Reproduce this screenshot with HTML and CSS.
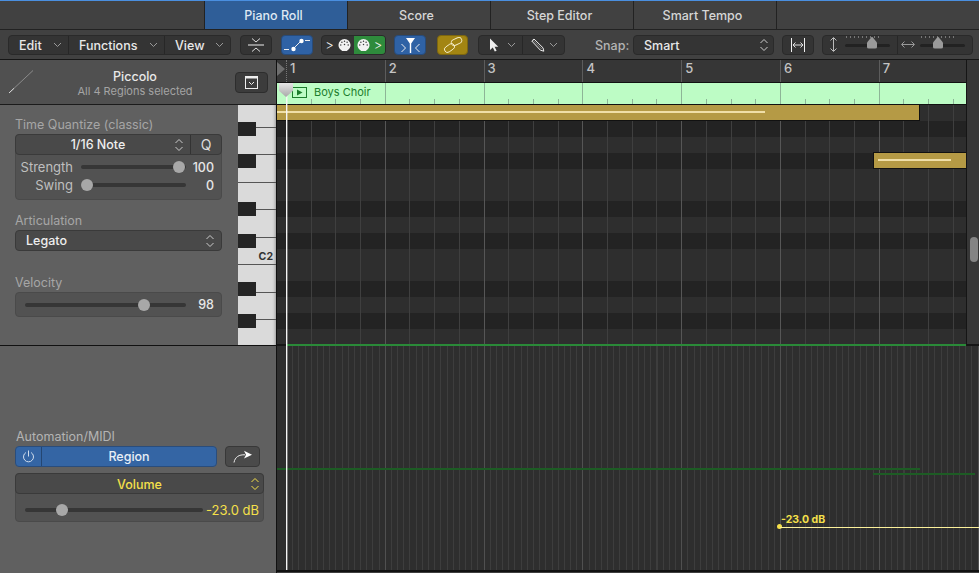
FILE: index.html
```html
<!DOCTYPE html>
<html lang="en">

<head>
    <meta charset="UTF-8">
    <title>Piano Roll</title>
    <link rel="stylesheet" href="styles.css">
</head>

<body>
    <svg class="defs" width="0" height="0">
        <symbol id="chev" viewBox="0 0 9 6"><path d="M1 1l3.500 3.500L8 1" fill="none" stroke="currentColor" stroke-width="1"/></symbol>
        <symbol id="updown" viewBox="0 0 10 16"><path d="M1.500 6L5 2.500 8.500 6M1.500 10L5 13.500 8.500 10" fill="none" stroke="currentColor" stroke-width="1"/></symbol>
        <symbol id="midi" viewBox="0 0 14 14"><path d="M7 .5a6.500 6.500 0 0 1 6.500 6.500c0 2.600-1.500 4.800-3.600 5.800v.7H4.100v-.7C2 11.800.5 9.600.5 7A6.500 6.500 0 0 1 7 .5z" fill="currentColor"/><g fill="#3a3a3a"><circle cx="3" cy="7" r=".8"/><circle cx="4.200" cy="4" r=".8"/><circle cx="7" cy="2.900" r=".8"/><circle cx="9.800" cy="4" r=".8"/><circle cx="11" cy="7" r=".8"/><circle cx="7" cy="6.500" r=".8"/></g></symbol>
    </svg>

    <div class="tabs">
        <div class="tab-spacer"></div>
        <div class="tab active">Piano Roll</div>
        <div class="tab">Score</div>
        <div class="tab">Step Editor</div>
        <div class="tab">Smart Tempo</div>
    </div>

    <div class="toolbar">
        <div class="btn-group menus">
            <div class="menu edit">Edit <svg class="chev"><use href="#chev"/></svg></div>
            <div class="menu functions">Functions <svg class="chev"><use href="#chev"/></svg></div>
            <div class="menu view">View <svg class="chev"><use href="#chev"/></svg></div>
        </div>
        <div class="btn-group icon-btn collapse">
            <svg width="18" height="16" viewBox="0 0 18 16"><path d="M5 1.500l4 3.500 4-3.500M5 14.500l4-3.500 4 3.500" fill="none" stroke="#ddd"/><path d="M1 8h16" stroke="#eee"/></svg>
        </div>
        <div class="btn-group icon-btn blue curve">
            <svg width="28" height="16" viewBox="0 0 28 16"><path d="M1 12.500h5M22 3.500h5M11 11l6-6" stroke="#eee" fill="none"/><circle cx="10.500" cy="12" r="2.200" fill="#fff"/><circle cx="18.500" cy="4" r="2.200" fill="#fff"/></svg>
        </div>
        <div class="btn-group midi-group">
            <div class="midi-half">
                <span class="gt">&gt;</span>
                <svg class="midi"><use href="#midi"/></svg>
            </div>
            <div class="midi-half on">
                <svg class="midi"><use href="#midi"/></svg>
                <span class="gt">&gt;</span>
            </div>
        </div>
        <div class="btn-group icon-btn blue filter">
            <svg width="26" height="16" viewBox="0 0 26 16"><path d="M4.500 7l4 4-4 4M22.500 7l-4 4 4 4" fill="none" stroke="#eee"/><path d="M9 1h9l-3.800 5.500V16h-1.400V6.500z" fill="#fff"/></svg>
        </div>
        <div class="btn-group icon-btn link">
            <svg width="20" height="16" viewBox="0 0 20 16" fill="none" stroke="#f4ecc8" stroke-width=".9"><rect x="1" y="8" width="11" height="6" rx="3" transform="rotate(-35 6.500 11)"/><rect x="8" y="1.500" width="11" height="6" rx="3" transform="rotate(-25 13.500 4.500)"/></svg>
        </div>
        <div class="btn-group tools">
            <div class="tool pointer">
                <svg width="10" height="14" viewBox="0 0 10 14"><path d="M1 .5v11.500l2.800-2.500 2 4 1.800-.8-2-3.900h3.700z" fill="#eee"/></svg>
                <svg class="chev"><use href="#chev"/></svg>
            </div>
            <div class="tool pencil">
                <svg width="14" height="14" viewBox="0 0 14 14"><path d="M.8 3L3 1l9 8.800.8 3.400-3.400-1z" fill="none" stroke="#eee"/><path d="M1.800 2l9 9" stroke="#aaa" stroke-width=".7"/></svg>
                <svg class="chev"><use href="#chev"/></svg>
            </div>
        </div>
        <div class="snap-label">Snap:</div>
        <div class="btn-group snap-select">
            <span>Smart</span>
            <svg class="updown"><use href="#updown"/></svg>
        </div>
        <div class="btn-group icon-btn fit">
            <svg width="14" height="14" viewBox="0 0 14 14"><path d="M.5 0v14M13.500 0v14" stroke="#eee"/><path d="M2 7h10M4.500 4.500L2 7l2.500 2.500M9.500 4.500L12 7 9.500 9.500" fill="none" stroke="#ddd"/></svg>
        </div>
        <div class="btn-group zooms">
            <div class="zoom-part vert">
                <svg width="9" height="15" viewBox="0 0 9 15"><path d="M4.500 1v13M1.500 3.500l3-3 3 3M1.500 11.500l3 3 3-3" fill="none" stroke="#bbb"/></svg>
                <div class="zoom-slider"><span class="zoom-knob zk-vert"></span></div>
            </div>
            <div class="zoom-part horiz">
                <svg width="14" height="9" viewBox="0 0 14 9"><path d="M1 4.500h12M3.500 1.500l-3 3 3 3M10.500 1.500l3 3-3 3" fill="none" stroke="#999"/></svg>
                <div class="zoom-slider"><span class="zoom-knob zk-horiz"></span></div>
            </div>
        </div>
    </div>

    <div class="main">
        <div class="editor">
            <div class="left">
                <div class="track-head">
                    <svg class="flute" width="28" height="26" viewBox="0 0 28 26"><path d="M2 24L26 1.500" stroke="#999" stroke-width=".8"/><path d="M2 24l5-4.700" stroke="#eee" stroke-width=".8"/></svg>
                    <div class="track-name">
                        <div class="track-title">Piccolo</div>
                        <div class="track-sub">All 4 Regions selected</div>
                    </div>
                    <div class="head-btn">
                        <svg width="13" height="13" viewBox="0 0 13 13"><rect x=".5" y=".5" width="12" height="12" fill="none" stroke="#eee"/><path d="M0 1.500h13" stroke="#eee" stroke-width="2"/><path d="M4 6l2.500 2.500L9 6" fill="none" stroke="#eee"/></svg>
                    </div>
                </div>
                <div class="left-body">
                    <div class="inspector">
                        <div class="field-label">Time Quantize (classic)</div>
                        <div class="box quantize">
                            <div class="select-row">
                                <div class="select-main note-select">1/16 Note <svg class="updown"><use href="#updown"/></svg></div>
                                <div class="q">Q</div>
                            </div>
                            <div class="slider-row strength">
                                <span class="slider-name">Strength</span>
                                <div class="slider"><span class="knob" style="left: 93%"></span></div>
                                <span class="slider-val">100</span>
                            </div>
                            <div class="slider-row swing">
                                <span class="slider-name">Swing</span>
                                <div class="slider"><span class="knob" style="left: 6%"></span></div>
                                <span class="slider-val">0</span>
                            </div>
                        </div>
                        <div class="field-label articulation-label">Articulation</div>
                        <div class="select-row solo">
                            <div class="select-main legato">Legato <svg class="updown"><use href="#updown"/></svg></div>
                        </div>
                        <div class="field-label velocity-label">Velocity</div>
                        <div class="box velocity">
                            <div class="slider"><span class="knob" style="left: 74%"></span></div>
                            <span class="slider-val">98</span>
                        </div>
                    </div>
                    <div class="keys">
                        <div class="white first"></div>
                        <div class="white"></div>
                        <div class="white"></div>
                        <div class="white"></div>
                        <div class="white"></div>
                        <div class="white c-key">C2</div>
                        <div class="white"></div>
                        <div class="white"></div>
                        <div class="white last"></div>
                        <span class="black" style="top: 17px"></span>
                        <span class="black" style="top: 49px"></span>
                        <span class="black" style="top: 97px"></span>
                        <span class="black" style="top: 129px"></span>
                        <span class="black" style="top: 177px"></span>
                        <span class="black" style="top: 209px"></span>
                    </div>
                </div>
            </div>
            <div class="roll">
                <div class="ruler">
                    <span class="locator"></span>
                    <div class="bar-nums">
                        <span class="bar-num">1</span>
                        <span class="bar-num">2</span>
                        <span class="bar-num">3</span>
                        <span class="bar-num">4</span>
                        <span class="bar-num">5</span>
                        <span class="bar-num">6</span>
                        <span class="bar-num">7</span>
                    </div>
                </div>
                <div class="region-strip">
                    <div class="strip-lines"></div>
                    <div class="region-label">
                        <svg width="15" height="11" viewBox="0 0 15 11"><rect x=".5" y=".5" width="14" height="10" fill="none" stroke="#1c7d2c"/><path d="M5 2.500l5.500 3-5.500 3z" fill="#1c7d2c"/></svg>
                        <span>Boys Choir</span>
                    </div>
                </div>
                <div class="notes">
                    <div class="grid-lines"></div>
                    <div class="note note-a"><span class="vel vel-a"></span></div>
                    <div class="note note-b"><span class="vel vel-b"></span></div>
                </div>
            </div>
            <div class="scrollbar"><span class="thumb"></span></div>
        </div>

        <div class="auto">
            <div class="auto-left">
                <div class="field-label auto-label">Automation/MIDI</div>
                <div class="auto-btns">
                    <div class="region-btn">
                        <span class="power">
                            <svg width="13" height="13" viewBox="0 0 13 13"><path d="M4 2.500a5 5 0 1 0 5 0M6.500 .5v6" fill="none" stroke="#cfdcec"/></svg>
                        </span>
                        <span class="region-txt">Region</span>
                    </div>
                    <div class="share-btn">
                        <svg width="20" height="13" viewBox="0 0 20 13"><path d="M1 12.500C2 7 6 4.500 12 4.800" fill="none" stroke="#eee"/><path d="M11 .8l8 3.900-8 3.800 2-3.800z" fill="#fff"/></svg>
                    </div>
                </div>
                <div class="box volume">
                    <div class="select-row vol-row">
                        <div class="select-main vol-select">Volume <svg class="updown"><use href="#updown"/></svg></div>
                    </div>
                    <div class="vol-slider">
                        <div class="slider"><span class="knob" style="left: 21%"></span></div>
                        <span class="slider-val">-23.0 dB</span>
                    </div>
                </div>
            </div>
            <div class="auto-grid">
                <div class="fine-lines"></div>
                <span class="green-line line-a"></span>
                <span class="green-line line-b"></span>
                <span class="db-text">-23.0 dB</span>
                <span class="db-dot"></span>
                <span class="db-line"></span>
            </div>
        </div>

        <div class="playhead"><span class="play-cap"></span></div>
    </div>
</body>

</html>
```
FILE: styles.css
```css
* {
    box-sizing: border-box;
}

html,
body {
    margin: 0;
    height: 573px;
    overflow: hidden;
}

body {
    font-family: Inter, "Liberation Sans", sans-serif;
    font-size: 12.500px;
    color: #eee;
    background: #3e3e3e;
    border-top: 1px solid #4a8fe0;
}

.defs {
    position: absolute;
}

/* tabs */
.tabs {
    display: flex;
    height: 29px;
    background: #414141;
    border-bottom: 1px solid #222;
}

.tab-spacer {
    width: 205px;
    border-right: 1px solid #222;
}

.tab {
    width: 143px;
    border-right: 1px solid #222;
    display: flex;
    justify-content: center;
    align-items: center;
    padding-right: 5px;
    color: #d6d6d6;
    font-weight: 450;
}

.tab.active {
    background: #2f5e98;
    color: #dfe8f3;
}

/* toolbar */
.toolbar {
    display: flex;
    align-items: center;
    height: 30px;
    padding-left: 8px;
    background: #414141;
    border-bottom: 1px solid #161616;
}

.btn-group {
    display: flex;
    height: 20px;
    background: #343434;
    border: 1px solid #2a2a2a;
    border-radius: 4px;
    color: #e8e8e8;
}

.icon-btn {
    width: 32px;
    align-items: center;
    justify-content: center;
}

.chev {
    width: 9px;
    height: 6px;
    color: #999;
}

.updown {
    width: 10px;
    height: 16px;
    color: #ccc;
}

.menus {
    width: 223px;
}

.menu {
    display: flex;
    align-items: center;
    justify-content: space-between;
    padding: 1px 6px 0 10px;
    border-right: 1px solid #272727;
    font-weight: 450;
}

.edit {
    width: 60px;
}

.functions {
    width: 96px;
}

.view {
    flex: 1;
    border-right: 0;
}

.collapse {
    margin-left: 9px;
}

.blue {
    background: #2f62a5;
    border-color: #274b7a;
}

.curve {
    margin-left: 9px;
}

.midi-group {
    width: 65px;
    margin-left: 8px;
    overflow: hidden;
}

.midi-half {
    width: 32px;
    display: flex;
    align-items: center;
    justify-content: center;
    gap: 4px;
    color: #f2f2f2;
}

.midi-half.on {
    flex: 1;
    background: #2e8b3c;
}

.gt {
    font-size: 13px;
    font-weight: 300;
}

.midi {
    width: 13px;
    height: 14px;
}

.filter {
    margin-left: 8px;
}

.link {
    margin-left: 11px;
    width: 31px;
    background: #a38512;
    border-color: #7c6610;
}

.tools {
    width: 87px;
    margin-left: 10px;
}

.tool {
    display: flex;
    align-items: center;
    justify-content: space-between;
    padding: 0 6px 0 10px;
}

.pointer {
    width: 44px;
    border-right: 1px solid #272727;
}

.pencil {
    flex: 1;
    padding-left: 8px;
}

.snap-label {
    width: 38px;
    margin-left: 30px;
    padding-top: 1px;
    color: #b4b4b4;
    font-weight: 450;
}

.snap-select {
    width: 141px;
    align-items: center;
    justify-content: space-between;
    padding: 1px 4px 0 10px;
    font-weight: 450;
}

.fit {
    margin-left: 8px;
}

.zooms {
    width: 151px;
    margin-left: 8px;
}

.zoom-part {
    display: flex;
    align-items: center;
    padding-left: 6px;
    gap: 7px;
}

.vert {
    width: 75px;
    border-right: 1px solid #272727;
}

.horiz {
    flex: 1;
    padding-left: 3px;
    gap: 5px;
}

.zoom-slider {
    position: relative;
    width: 45px;
    height: 3px;
    background: #222;
    border-radius: 2px;
    margin-top: 1px;
}

.zoom-slider::before {
    content: "";
    position: absolute;
    left: 1px;
    right: 8px;
    top: -8px;
    height: 2px;
    background: repeating-linear-gradient(90deg, #777 0 1px, transparent 1px 4px);
}

.zoom-knob {
    position: absolute;
    width: 10px;
    height: 12px;
    top: -7px;
    background: #9a9a9a;
    border-radius: 0 0 2px 2px;
    clip-path: polygon(50% 0, 100% 50%, 100% 100%, 0 100%, 0 50%);
}

.zk-vert {
    left: 22px;
}

.zk-horiz {
    left: 13px;
}

/* editor */
.main {
    position: relative;
}

.editor {
    display: flex;
    height: 285px;
}

.left {
    width: 277px;
    display: flex;
    flex-direction: column;
    border-right: 1px solid #111;
}

.track-head {
    display: flex;
    align-items: center;
    height: 45px;
    background: #505050;
    border-bottom: 1px solid #1b1b1b;
    padding: 0 8px 0 7px;
}

.flute {
    flex: none;
}

.track-name {
    flex: 1;
    text-align: center;
    padding-top: 3px;
}

.track-title {
    color: #e8e8e8;
    font-weight: 450;
}

.track-sub {
    font-size: 11px;
    color: #a4a4a4;
}

.head-btn {
    width: 33px;
    height: 21px;
    display: flex;
    justify-content: center;
    align-items: center;
    background: #3c3c3c;
    border: 1px solid #2d2d2d;
    border-radius: 4px;
}

.left-body {
    flex: 1;
    display: flex;
}

.inspector {
    width: 238px;
    background: #606060;
    padding: 12px 0 0 15px;
}

.field-label {
    color: #a6a6a6;
    font-size: 12.500px;
    height: 17px;
    line-height: 16px;
}

.box {
    width: 207px;
    background: #525252;
    border: 1px solid #4a4a4a;
    border-radius: 4px;
}

.select-row {
    display: flex;
    height: 21px;
    background: #494949;
    border: 1px solid #3a3a3a;
    border-radius: 4px;
    margin: -1px;
}

.select-main {
    flex: 1;
    display: flex;
    align-items: center;
    justify-content: center;
    position: relative;
    font-weight: 450;
}

.select-main .updown {
    position: absolute;
    right: 6px;
    top: 2px;
}

.note-select {
    padding-right: 10px;
}

.q {
    width: 31px;
    display: flex;
    align-items: center;
    justify-content: center;
    border-left: 1px solid #333;
    color: #ddd;
    font-size: 14px;
}

.quantize {
    height: 66px;
}

.slider-row {
    display: flex;
    align-items: center;
    height: 18px;
}

.strength {
    margin-top: 4px;
}

.slider-name {
    width: 57px;
    text-align: right;
    color: #bfbfbf;
    flex: none;
    font-size: 13px;
}

.slider {
    position: relative;
    height: 4px;
    background: #363636;
    border-radius: 2px;
    flex: none;
    width: 105px;
    margin-left: 8px;
}

.knob {
    position: absolute;
    top: -4px;
    width: 12px;
    height: 12px;
    margin-left: -6px;
    background: #a8a8a8;
    border-radius: 50%;
}

.slider-val {
    flex: 1;
    text-align: right;
    padding-right: 7px;
    font-weight: 450;
    color: #e6e6e6;
}

.articulation-label {
    margin-top: 13px;
}

.solo {
    width: 207px;
    margin: 0;
}

.legato {
    justify-content: flex-start;
    padding-left: 10px;
}

.velocity-label {
    margin-top: 24px;
}

.velocity {
    display: flex;
    align-items: center;
    height: 25px;
}

.velocity .slider {
    width: 161px;
    margin-left: 9px;
}

/* piano */
.keys {
    position: relative;
    width: 38px;
    background: #dadada;
    box-shadow: inset -3px 0 3px -2px #999;
}

.white {
    height: 27.430px;
    border-bottom: 1px solid #555;
    padding-left: 18px;
}

.first {
    height: 23px;
}

.last {
    height: 25px;
    border-bottom: 0;
}

.c-key {
    display: flex;
    align-items: flex-end;
    justify-content: flex-end;
    padding-right: 3px;
    padding-bottom: 1px;
    font-size: 10.500px;
    font-weight: 700;
    color: #333;
}

.black {
    position: absolute;
    left: 0;
    width: 18px;
    height: 14px;
    background: #252525;
}

/* roll */
.roll {
    flex: 1;
    display: flex;
    flex-direction: column;
    min-width: 0;
}

.ruler {
    position: relative;
    height: 23px;
    background: #363636;
    border-bottom: 1px solid #111;
}

.locator {
    position: absolute;
    left: 0;
    top: 2px;
    border-left: 8px solid #6e6e6e;
    border-top: 7px solid transparent;
    border-bottom: 7px solid transparent;
}

.bar-nums {
    display: flex;
    height: 100%;
    margin-left: 9px;
}

.bar-num {
    width: 98.800px;
    flex: none;
    padding: 1px 0 0 3px;
    border-left: 1px solid #5c5c5c;
    color: #c4c4c4;
    font-size: 13px;
    font-weight: 500;
    line-height: 15px;
}

.bar-num:first-child {
    border-left: 1px dotted #777;
}

.region-strip {
    position: relative;
    height: 22px;
    background: #bdfcc5;
    border-bottom: 1px solid #111;
}

.strip-lines {
    position: absolute;
    top: 0;
    bottom: 0;
    left: 9px;
    right: 0;
    background:
        repeating-linear-gradient(90deg, #8db597 0 1px, transparent 1px 98.800px),
        repeating-linear-gradient(90deg, #8db597 0 1px, transparent 1px 24.700px) 0 16px / 100% 5px no-repeat;
}

.region-label {
    position: relative;
    display: flex;
    align-items: center;
    gap: 7px;
    height: 100%;
    padding: 0 0 3px 15px;
    font-size: 11px;
    color: #1c7d2c;
}

.notes {
    position: relative;
    flex: 1;
    background: linear-gradient(180deg,
        #2e2e2e 0 16px, #232323 16px 32px,
        #2e2e2e 32px 48px, #232323 48px 64px,
        #2e2e2e 64px 96px, #232323 96px 112px,
        #2e2e2e 112px 128px, #232323 128px 144px,
        #2e2e2e 144px 176px, #232323 176px 192px,
        #2e2e2e 192px 208px, #232323 208px 224px,
        #2e2e2e 224px 240px);
}

.grid-lines {
    position: absolute;
    top: 0;
    bottom: 0;
    left: 9px;
    right: 0;
    background:
        repeating-linear-gradient(90deg, #565656 0 1px, transparent 1px 98.800px),
        repeating-linear-gradient(90deg, #3f3f3f 0 1px, transparent 1px 24.700px);
}

.note {
    position: absolute;
    height: 17px;
    background: #b59a45;
    border: 1px solid #111;
}

.note-a {
    left: -1px;
    top: -1px;
    width: 644px;
}

.note-b {
    left: 596px;
    top: 47px;
    right: -1px;
}

.vel {
    position: absolute;
    top: 6px;
    height: 2px;
    background: #f0dfa8;
}

.vel-a {
    left: 0;
    width: 488px;
}

.vel-b {
    left: 4px;
    width: 73px;
}

.scrollbar {
    position: relative;
    width: 13px;
    background: #373737;
    border-left: 1px solid #151515;
}

.thumb {
    position: absolute;
    left: 3px;
    top: 177px;
    width: 8px;
    height: 25px;
    background: #848484;
    border-radius: 4px;
}

/* automation */
.auto {
    display: flex;
    height: 228px;
    border-top: 1px solid #111;
}

.auto-left {
    width: 277px;
    background: #606060;
    border-right: 1px solid #111;
    padding: 83px 0 0 15px;
}

.auto-label {
    padding-left: 1px;
    color: #b4b4b4;
}

.auto-btns {
    display: flex;
    gap: 8px;
}

.region-btn {
    display: flex;
    width: 202px;
    height: 21px;
    background: #3465a4;
    border: 1px solid #2a4d7c;
    border-radius: 4px;
}

.power {
    width: 26px;
    display: flex;
    align-items: center;
    justify-content: center;
    border-right: 1px solid #244672;
}

.region-txt {
    flex: 1;
    text-align: center;
    line-height: 19px;
    font-weight: 450;
    color: #e8eef6;
}

.share-btn {
    width: 35px;
    height: 21px;
    display: flex;
    align-items: center;
    justify-content: center;
    background: #4a4a4a;
    border: 1px solid #383838;
    border-radius: 4px;
}

.volume {
    width: 249px;
    height: 49px;
    margin-top: 6px;
}

.vol-select {
    color: #f5e04a;
    padding-top: 1px;
}

.vol-select .updown {
    color: #f5e04a;
    right: 3px;
}

.vol-slider {
    display: flex;
    align-items: center;
    height: 28px;
    padding-top: 6px;
}

.vol-slider .slider {
    width: 178px;
    margin-left: 9px;
}

.vol-slider .slider-val {
    color: #f5e04a;
    padding-right: 4px;
    white-space: nowrap;
    font-weight: 400;
    font-size: 13px;
}

.auto-grid {
    position: relative;
    flex: 1;
    height: 228px;
    background: #2e2e2e;
    border-bottom: 2px solid #111;
    border-top: 2px solid #161616;
    margin-top: -2px;
}

.auto-grid::before {
    content: "";
    position: absolute;
    left: 10px;
    top: -2px;
    width: 679px;
    height: 2px;
    background: #2a8a38;
}

.fine-lines {
    position: absolute;
    top: 0;
    bottom: 0;
    left: 9px;
    right: 0;
    background:
        repeating-linear-gradient(90deg, #505050 0 1px, transparent 1px 98.800px),
        repeating-linear-gradient(90deg, #3d3d3d 0 1px, transparent 1px 6.175px);
}

.green-line {
    position: absolute;
    height: 2px;
    background: #1d5c24;
}

.line-a {
    left: 0;
    top: 122px;
    width: 643px;
}

.line-b {
    left: 596px;
    top: 127px;
    width: 102px;
}

.db-text {
    position: absolute;
    left: 504px;
    top: 167px;
    font-size: 10.500px;
    font-weight: 700;
    color: #f5e04a;
}

.db-dot {
    position: absolute;
    left: 500px;
    top: 178px;
    width: 5px;
    height: 5px;
    border-radius: 50%;
    background: #f5e04a;
}

.db-line {
    position: absolute;
    left: 503px;
    right: 0;
    top: 181px;
    height: 1px;
    background: #fbf09a;
}

.playhead {
    position: absolute;
    left: 286px;
    top: 23px;
    width: 1px;
    height: 487px;
    background: #f4f4f4;
    box-shadow: 1px 0 0 rgba(255, 255, 255, 0.35);
}

.play-cap {
    position: absolute;
    left: -7px;
    top: 0;
    width: 14px;
    height: 14px;
    background: linear-gradient(180deg, #e6e6e6, #a8a8a8);
    clip-path: polygon(0 0, 100% 0, 100% 55%, 50% 100%, 0 55%);
}
```
